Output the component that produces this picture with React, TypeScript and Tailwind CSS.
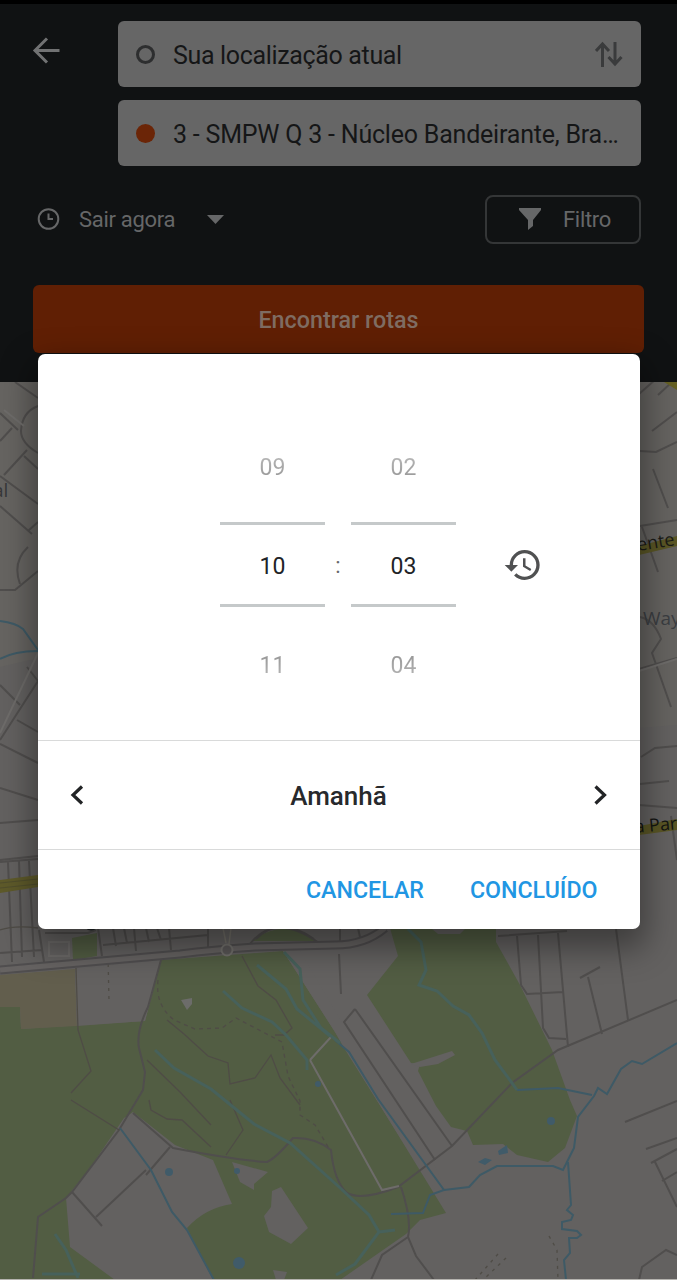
import React from "react";
import { MdHistory } from "react-icons/md";

function MapView() {
  return (
    <svg className="block h-[898px] w-[677px]" viewBox="0 382 677 898" fill="none">
      <rect y="382" width="677" height="898" fill="#636160" />

      <g fill="#525d43">
        <path d="M0 1007H20L21 1029L145 1021L161 960L283 951L305 985L335 1032L446 1213L420 1220L406 1234L340 1280H0Z" />
        <path d="M390 928L398 956L367 995L411 1063L420 1064L418 1071L436 1106L451 1127L467 1131L473 1145L503 1144L517 1155L548 1162L565 1148L577 1116L570 1100L552 1050L520 985L496 942V928Z" />
        <path d="M252 941Q270 926 295 929L315 941Z" />
        <path d="M72 938L97 933V956L73 960Z" />
      </g>
      <path d="M335 1032L344 1048L411 1155L437 1192L446 1190L432 1160L350 1036L300 951L283 951Z" fill="#636160" />
      <path d="M0 975L75 969L77 1026L21 1029L20 1007H0Z" fill="#625e4d" />
      <path d="M75 969L161 960L145 1021L77 1026Z" fill="#636160" />
      <path d="M133 1112L175 1145L213 1160L232 1204Q205 1208 187 1228L213 1280H115L70 1247L66 1198L90 1168L124 1118Z" fill="#636160" />
      <path d="M232 1162L268 1172L254 1184V1190L240 1182ZM272 1191L281 1187L308 1228L291 1244L269 1232L264 1216L271 1207ZM273 1270L287 1272L284 1280H276Z" fill="#636160" />
      <path d="M181 1000L192 998V1004L187 1010Z" fill="#6c6c6a" />
      <path d="M411 1064L452 1051L455 1055L438 1064L420 1067Z" fill="#636160" />
      <path d="M432 929H465L460 934H438Z" fill="#636160" />
      <path d="M0 382H38V658L0 667Z" fill="#666461" />
      <path d="M639 382H677V725L639 728Z" fill="#656360" />

      <g stroke="#504e4d" strokeWidth="2">
        <path d="M15 382L38 398M0 413L18 430M12 428L0 441M38 406Q22 412 21 431Q21 443 38 453M27 450L4 475M24 456L38 469M0 476L38 504M0 506L32 534M28 531L38 522M28 547Q12 562 20 584M0 590H15L38 571M27 667L38 681L0 740M0 685L20 705M17 720L38 732M0 744L38 763M0 788L38 800M0 823L38 820M0 860L38 856" />
        <path d="M639 394L656 379M658 395L672 382M652 431L677 412M640 451L656 452L677 442M653 469L668 508M640 526L677 520M642 527L658 572M640 617Q654 620 661 639L652 653L671 707M639 669L677 658M641 757L655 748L677 746M640 784L669 781M639 805L677 808M671 816L677 860" />
        <path d="M0 862L38 859M8 862L12 962M19 861L22 957M29 861L34 957M39 930L44 962M98 928L102 956M113 928L116 946M124 928L127 943M134 928L136 951M146 928L149 942M157 928L161 940M169 928L171 950M208 928V948M103 945L208 935M0 953L42 950M45 933H88L96 930" />
        <path d="M250 944Q275 912 319 943M256 939Q280 915 314 939M340 928V941M358 928L360 937M339 954L341 994" />
        <path d="M355 1009L344 1022L435 1160M355 1009L452 1146" />
        <path d="M498 936L567 931M517 936L521 985L527 994L563 992M538 935L543 1028L549 1038L566 1039M558 933L568 1047M616 929L628 1020M588 977L602 1034M580 978L600 967M677 1000L558 1050L512 1083L452 1146L398 1187Q362 1201 347 1193Q334 1181 331 1150Q315 1137 293 1138Q276 1158 267 1162Q235 1160 173 1148L133 1113" />
        <path d="M161 960L148 1007Q136 1031 139 1048L145 1072L143 1090L119 1130L72 1192L66 1198L38 1217L33 1278M170 1147L146 1175M146 1170L96 1217M72 1192L102 1226M401 1187Q412 1220 408 1237L416 1256L434 1280M408 1237L382 1255L371 1280" />
        <path d="M625 1122L677 1101M646 1149L677 1138M651 1163L677 1149M655 1162L677 1207M662 1181L677 1172M639 1280L642 1267L666 1250L677 1255" />
      </g>

      <g stroke="#4f4c46" strokeWidth="1.3">
        <path d="M76 968L78 1030L91 1071L71 1093M71 1100L119 1130M242 956L258 986L276 1000L292 1028L284 1035L275 1035M167 1020L184 1034L208 1056L228 1063L230 1084L255 1078L271 1055L280 1078L300 1105M147 1060L180 1092L211 1125M149 1100L151 1110L167 1119L182 1120L211 1147M230 1100L243 1130L226 1155" />
        <path d="M158 980Q155 1005 174 1020L195 1029L222 1028L236 1018L282 1042L288 1076L300 1101L300 1115L315 1125L330 1150" strokeDasharray="4 4" />
        <path d="M108 956L109 1001M549 1236L557 1250L558 1280M498 1254L475 1280M506 1258L483 1280" strokeDasharray="3 5" />
        <path d="M0 930Q15 925 38 928" />
      </g>
      <g stroke="#504e4f" strokeWidth="9">
        <path d="M0 970L180 954Q212 950 255 947L335 945Q365 945 385 928" />
      </g>
      <g stroke="#666362" strokeWidth="5">
        <path d="M0 970L180 954Q212 950 255 947L335 945Q365 945 385 928" />
      </g>
      <path d="M223 928L226 943M231 928L229 944" stroke="#737069" strokeWidth="1.5" />
      <circle cx="227" cy="950" r="5.500" fill="#5a5757" stroke="#72706c" strokeWidth="2" />
      <path d="M49 942H69V956H49Z" stroke="#6c6a68" strokeWidth="2" />
      <path d="M84 927Q91 934 98 927Z" fill="#1d2324" />
      <path d="M0 880L38 875V887L0 893Z" fill="#5e5a2a" />
      <path d="M0 883L38 879M0 888L38 884" stroke="#504e2c" strokeWidth="1" />
      <path d="M664 382H677V390Z" fill="#656023" />
      <path d="M639 546L677 536V546L639 555ZM639 826L677 819V830L639 835Z" fill="#5a5625" />

      <g stroke="#6e6c6a" strokeWidth="2">
        <path d="M310 1060L331 1037M310 1060L382 1190L399 1186M4 410L24 426M38 653L0 733M639 671L677 659" />
      </g>
      <g stroke="#3e5a66" strokeWidth="2">
        <path d="M0 621Q16 623 23 629L38 650M0 659Q14 651 38 651" />
        <path d="M120 1128L151 1170L172 1212L187 1230L214 1280M335 1040L349 1052L378 1099L444 1190L430 1195L423 1213L391 1214" />
        <path d="M677 1043L642 1064L632 1061L621 1069L607 1094L598 1088L594 1096L578 1117L574 1148L563 1170L553 1166H497L480 1175L469 1187L444 1190M517 1090L558 1088L592 1095M568 1162L571 1205L567 1210L573 1215L571 1220L562 1222V1229L577 1231L581 1235L577 1238H569L570 1253L564 1260L566 1280" />
      </g>
      <g stroke="#47615b" strokeWidth="3">
        <path d="M284 952L300 969L303 1000L321 1028L340 1043M257 965L286 989L297 1009L330 1036M223 991L242 1008L272 1022L286 1035L307 1060V1070M155 1050L174 1068L211 1089L254 1124L290 1143L338 1186L369 1215L379 1232L355 1264L336 1275M408 929L421 942L426 970L419 985L437 991L453 1006L469 1015L482 1033L495 1060L512 1083L517 1090M55 1234L66 1250L78 1278M42 1274H80M379 1232L395 1230" />
      </g>
      <g fill="#405b69">
        <circle cx="169" cy="1172" r="4" />
        <circle cx="237" cy="1171" r="3" />
        <circle cx="239" cy="1263" r="6" />
        <circle cx="318" cy="1084" r="3" />
        <circle cx="551" cy="1121" r="4" />
        <path d="M478 1162L485 1158L492 1160L485 1165ZM498 1151L507 1145L508 1153L499 1155Z" />
      </g>

      <g fontFamily="'Open Sans', 'Noto Sans', sans-serif" fontSize="19">
        <text x="-7" y="497" fill="#373839">al</text>
        <text x="638" y="551" fill="#1b1b17" fontSize="18" transform="rotate(-9 638 551)">ente</text>
        <text x="643" y="625" fill="#3b3e42">Way</text>
        <text x="635" y="833" fill="#141513" fontSize="18" transform="rotate(-5 635 833)">a Par</text>
      </g>
      <path d="M0 1279.500H677" stroke="#b5b3af" strokeWidth="1" />
    </svg>
  );
}

function Field({ children }: { children: React.ReactNode }) {
  return (
    <div className="flex h-[66px] w-[523px] items-center rounded-md bg-[#666666] px-[18px] text-[25px] text-[#151617]">
      {children}
    </div>
  );
}

function Header() {
  return (
    <header className="h-[382px] w-full border-t-4 border-black bg-[#101213]">
      <div className="flex pt-[17px]">
        <svg className="mt-[15px] ml-[31px] h-[30px] w-[30px] shrink-0" viewBox="0 0 30 30" fill="none" stroke="#717273" strokeWidth="3">
          <path d="M28.500 14.500H4M16 2.500L4 14.500L16 26.500" />
        </svg>
        <div className="ml-[57px] flex flex-col gap-[13px]">
          <Field>
            <span className="mr-[18px] h-[19px] w-[19px] rounded-full border-[3.5px] border-[#2d2e2f]" />
            <span className="flex-1 pt-[3px] tracking-[-0.34px]">Sua localização atual</span>
            <svg className="h-7 w-7" viewBox="0 0 28 28" fill="none" stroke="#3a3b3c" strokeWidth="3">
              <path d="M7.500 27V4M1 11L7.500 4L14 11M20 2V24M13.500 17L20 24L26.500 17" />
            </svg>
          </Field>
          <Field>
            <span className="mr-[18px] h-[19px] w-[19px] shrink-0 rounded-full bg-[#6b2507]" />
            <span className="pt-[3px] tracking-[-0.21px] whitespace-nowrap">3 - SMPW Q 3 - Núcleo Bandeirante, Bra…</span>
          </Field>
        </div>
      </div>
      <div className="mt-[29px] flex h-[49px] items-center pr-[36px] pl-[37px] text-[22px] tracking-[-0.3px] text-[#666768]">
        <svg className="-mt-[2px] h-6 w-6" viewBox="0 0 24 24" fill="none" stroke="#666768" strokeWidth="2">
          <circle cx="11.500" cy="12" r="9.800" />
          <path d="M11.500 6.500V12H16" />
        </svg>
        <span className="ml-[18px]">Sair agora</span>
        <svg className="ml-[32px] h-[9px] w-[17px]" viewBox="0 0 17 9">
          <path d="M0 0H17L8.500 9Z" fill="#666768" />
        </svg>
        <div className="ml-auto flex h-[49px] w-[156px] items-center rounded-lg border-2 border-[#343637] pl-[32px]">
          <svg className="-mt-[2px] h-[22px] w-[22px]" viewBox="0 0 22 22">
            <path d="M0 0H22V2L14 12V18L9 22V12L0 2Z" fill="#666768" />
          </svg>
          <span className="ml-[22px]">Filtro</span>
        </div>
      </div>
      <div className="mx-[33px] mt-[41px] flex h-[68px] items-center justify-center rounded-md bg-[#601f04] pt-[3px] text-[23.3px] font-medium text-[#7f6c62]">
        Encontrar rotas
      </div>
    </header>
  );
}

function Wheel({ before, value, after }: { before: string; value: string; after: string }) {
  return (
    <div className="flex w-[105px] flex-col text-center text-[23px] leading-[30px]">
      <span className="bg-linear-to-b from-[#bbbbbb] to-[#929292] bg-clip-text pl-px text-transparent">{before}</span>
      <div className="mt-[39px] mb-[44px] flex h-[85px] items-center justify-center border-y-[3px] border-[#c5c9ca] pt-[5px] pl-px text-[#212327]">{value}</div>
      <span className="bg-linear-to-b from-[#929292] to-[#bbbbbb] bg-clip-text pl-px text-transparent">{after}</span>
    </div>
  );
}

function Chevron({ right = false }: { right?: boolean }) {
  return (
    <svg className="h-5 w-[14px]" viewBox="0 0 14 20" fill="none" stroke="#222426" strokeWidth="3.2">
      <path d={right ? "M1.500 1.500L10.500 10L1.500 18.500" : "M12 1.500L3 10L12 18.500"} />
    </svg>
  );
}

function TimeDialog() {
  return (
    <div className="flex h-[575px] w-[602px] flex-col overflow-hidden rounded-[7px] bg-white shadow-[0_14px_32px_6px_rgba(0,0,0,0.38)]">
      <div className="flex h-[386px] pt-[99px] pl-[182px]">
        <Wheel before="09" value="10" after="11" />
        <span className="mt-[98px] w-[26px] pl-px text-center text-[22px] leading-[30px] text-[#66686a]">:</span>
        <Wheel before="02" value="03" after="04" />
        <MdHistory className="mt-[92px] ml-[47px] h-[40px] w-[40px] text-[#505152]" />
      </div>
      <div className="flex h-[110px] items-center justify-between border-y border-[#d9dada] px-[32px] text-[26px] font-medium text-[#27292c]">
        <button><Chevron /></button>
        <span className="pt-[2px]">Amanhã</span>
        <button><Chevron right /></button>
      </div>
      <div className="flex flex-1 items-center justify-end gap-[46px] pt-[2px] pr-[42px] text-[23.2px] font-medium text-[#2196e3]">
        <button>CANCELAR</button>
        <button>CONCLUÍDO</button>
      </div>
    </div>
  );
}

export default function App() {
  return (
    <main className="relative h-[1280px] w-[677px] overflow-hidden bg-[#636160] font-[Roboto,sans-serif]">
      <Header />
      <MapView />
      <div className="absolute inset-0 flex items-start justify-center pt-[354px]">
        <TimeDialog />
      </div>
    </main>
  );
}
